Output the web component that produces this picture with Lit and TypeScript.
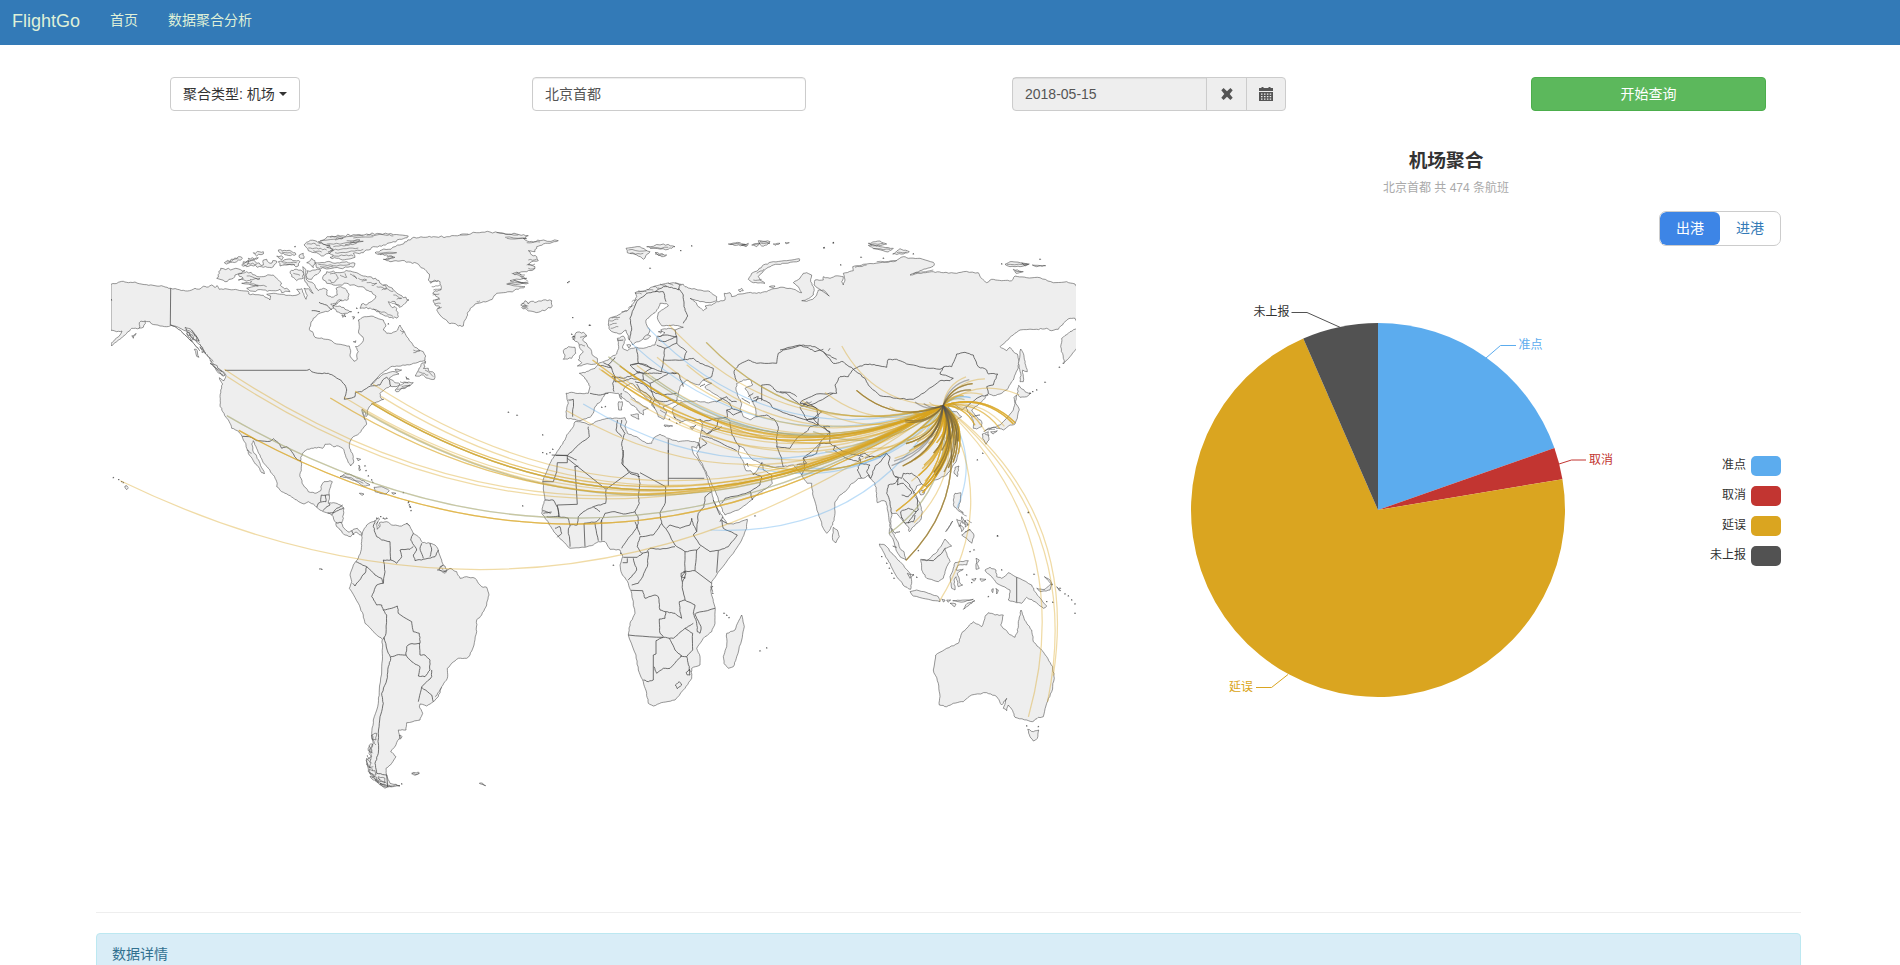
import { LitElement, html, svg, css } from "lit";
import { customElement, state } from "lit/decorators.js";

/* ---------- map sheets: every sheet holds points in thirds of a pixel ---------- */
type Sheet = [number, number];
const NA: Sheet = [100, 220];
const GL: Sheet = [340, 220];
const EU: Sheet = [540, 230];
const AS: Sheet = [780, 230];
const AF: Sheet = [520, 450];
const SA: Sheet = [320, 500];
const OC: Sheet = [850, 440];

type Pt = [number, number];
const pts = (s: Sheet, text: string): Pt[] =>
  text.trim().split(/\s+/).map((p) => {
    const [x, y] = p.split(",").map(Number);
    return [s[0] + x / 3, s[1] + y / 3] as Pt;
  });

let seed = 7;
const rnd = () => {
  seed = (seed * 16807) % 2147483647;
  return seed / 2147483647 - 0.5;
};

/* Coasts and rivers are broken up a little so that long segments do not look ruled. */
const roughen = (list: Pt[], amount: number, closed: boolean): Pt[] => {
  if (!amount) return list;
  const out: Pt[] = [];
  const n = closed ? list.length : list.length - 1;
  for (let i = 0; i < n; i++) {
    const a = list[i];
    const b = list[(i + 1) % list.length];
    out.push(a);
    const dx = b[0] - a[0];
    const dy = b[1] - a[1];
    const len = Math.hypot(dx, dy);
    const edge = (a[0] < 111.5 && b[0] < 111.5) || (a[0] > 1075.5 && b[0] > 1075.5);
    if (edge || len < 2) continue;
    const steps = Math.min(5, Math.max(2, Math.round(len / 2)));
    for (let k = 1; k < steps; k++) {
      const t = k / steps;
      const d = rnd() * amount;
      out.push([a[0] + dx * t - (dy / len) * d, a[1] + dy * t + (dx / len) * d]);
    }
  }
  if (!closed) out.push(list[list.length - 1]);
  return out;
};
const toPath = (list: Pt[], closed: boolean) =>
  "M" + list.map((p) => p[0].toFixed(1) + " " + p[1].toFixed(1)).join("L") + (closed ? "Z" : "");
const area = (rough: number, ...parts: [Sheet, string][]) =>
  toPath(roughen(parts.flatMap(([s, t]) => pts(s, t)), rough, true), true);
const lines = (s: Sheet, rough: number, text: string) =>
  text.split(";").filter((t) => t.trim()).map((t) => toPath(roughen(pts(s, t), rough, false), false)).join("");
const isles = (s: Sheet, rough: number, text: string) =>
  text.split(";").filter((t) => t.trim()).map((t) => area(rough, [s, t])).join("");
const dots = (s: Sheet, text: string) =>
  pts(s, text).map(([x, y]) => `M${(x - 0.5).toFixed(1)} ${y.toFixed(1)}l.7-.4.4.5z`).join("");

const northAmerica = area(1.1,
  [NA, "33,193 45,191 55,187 70,184 85,188 105,186 118,191 140,194 165,197 190,199 212,205 232,208 250,211 262,213 275,210 285,205 300,207 310,199 325,201 335,195 345,203 352,197 358,208 375,206 400,209 425,212 445,214 446,222 465,224 490,226 510,240 512,228 500,223 520,220 545,223 565,226 588,226 600,220 590,208 605,206 612,226 618,238 622,226 612,205 625,206 632,215 640,220 628,200 615,185 612,165 608,140 618,150 620,180 640,190 648,205 655,212 670,205 682,210 680,225 695,232 712,225 708,205 722,200 740,210 747,222 745,238 730,242 715,240 708,250 692,252 700,262 688,272 672,276 655,282 640,295 632,312 628,328 640,340 645,352 665,354 690,360 710,372 735,376 748,378 752,392 750,408 762,424 772,418 770,405 775,395 766,380 778,376 790,362 788,350 776,340 778,320 775,300 788,292 800,290 820,289 835,296 850,300 858,318 850,330 860,340 875,340 885,335 893,330 900,315 908,330 915,340 925,355 935,368 945,382 955,388 970,395 977,408 975,420 960,424 940,430 915,436 890,438 872,440 860,450 845,460 830,475 820,485 812,495 828,480 845,466 865,458 885,455 897,462 880,466 868,474 885,488 900,492 888,500 870,498 850,512 840,520 843,535 851,538 835,545 818,550 808,560 802,572 803,585 798,590 795,575 786,568 790,585 797,600 800,612 790,625 778,640 760,650 750,665 748,678 752,690 760,710 760,730 752,738 745,728 738,712 733,695 728,685 715,678 700,680 690,672 675,673 668,685 655,682 640,685 622,688 608,700 602,712 604,740 600,770 610,795 625,815 645,820 662,812 665,795 672,785 690,782 697,785 692,800 687,818 688,825 685,850 700,848 722,855 732,865 730,885 728,900"],
  [SA, "68,62 65,70 72,85 88,97 100,88 112,85 122,95 128,108 118,104 108,96 92,110 75,105 60,90 50,80 48,68 35,45 20,38 5,32"],
  [NA, "650,862 640,852 625,845 612,852 590,840 565,825 545,815 530,800 530,785 520,765 505,745 490,728 480,705 468,680 460,662 455,672 458,690 470,710 480,730 488,748 493,762 485,758 475,740 460,722 445,700 440,685 437,670 428,655 420,640 412,632 395,625 390,610 378,592 368,575 360,555 360,530 362,510 368,492 358,473 372,482 378,466 370,456 355,446 340,432 330,418 315,398 305,381 290,366 280,349 265,335 250,330 235,322 215,315 200,320 180,318 155,312 150,305 135,303 118,325 95,325 80,340 68,350 45,368 35,378 33,370 45,358 60,345 66,333 50,335 33,331"]);

const arctic = isles(NA, 2.2,
  "362,145 400,147 435,152 425,160 405,165 400,175 375,185 350,175 358,160;" +
  "415,163 440,155 465,165 485,170 510,165 520,165 530,175 540,185 545,200 560,205 570,215 545,218 540,208 520,212 490,210 450,213 440,205 475,198 425,190 455,185 415,180 430,175;" +
  "373,128 400,118 420,110 427,115 410,125 385,130;" +
  "425,135 430,125 455,120 470,130 490,135 490,120 500,118 510,130 525,122 530,128 520,140 490,142 460,138 440,140;" +
  "460,98 490,95 490,102 470,108;430,132 445,120 440,136;445,115 475,113 455,121;" +
  "535,125 560,118 585,122 600,125 595,138 560,135 540,138;535,90 560,92 580,98 588,103 560,105 540,98;" +
  "645,128 680,125 705,130 740,125 765,130 760,142 720,145 680,147 650,143;" +
  "655,65 690,50 720,48 760,44 800,42 840,41 880,44 925,48 905,58 880,65 850,75 820,80 805,90 790,98 760,100 765,112 740,118 710,115 690,112 700,105 685,95 700,88 680,82 690,75 665,70;" +
  "612,75 625,65 645,62 670,72 690,80 700,90 690,100 670,108 650,98 625,92;" +
  "620,128 635,115 645,128 640,143;598,105 610,100 612,115 602,115;530,108 550,112 545,120;570,155 590,148 608,155 610,175 590,182 575,170;622,152 662,150 645,165 635,178 620,172;" +
  "672,165 680,155 700,153 720,158 745,153 770,158 790,168 810,170 830,180 845,192 865,200 880,210 900,225 927,240 915,250 898,262 885,245 865,245 872,258 890,265 895,290 880,295 850,285 830,275 815,268 800,262 780,265 785,252 800,255 820,240 828,228 815,215 795,205 775,200 755,195 740,190 720,195 700,195 680,190 670,180;" +
  "700,255 720,258 735,268 755,275 735,280 710,275 700,265;725,285 735,283 738,290 728,292;757,290 765,292 760,298;760,365 768,362 766,368;" +
  "330,430 345,434 360,448 375,466 365,466 348,450;283,388 292,392 297,412 288,402;255,322 275,332 290,350 298,362 285,360 270,345;262,335 280,350 276,365 266,352;300,380 312,392 306,398;95,348 108,340 100,355;118,308 135,303 130,322 118,324;" +
  "975,422 962,440 950,460 946,468 970,465 985,475 1003,478 1003,460 990,455 985,445 970,445 976,430;885,448 905,450 895,454;885,510 895,500 920,488 940,488 930,498 905,505 895,515;918,470 928,478 920,478") +
  isles(NA, 0.9, "720,770 735,760 755,765 775,775 795,785 810,795 790,798 770,785 745,775;822,802 845,800 868,812 858,822 840,820 825,815;778,820 792,822 785,826;875,818 888,820 880,823;75,798 80,797 85,803 80,809 76,804;770,715 782,718 774,722;776,735 782,750 778,752");
/* fjords and channels that cut into the northern coasts */
const fjords =
  lines(NA, 1.6, "660,62 700,58 730,54 705,60;690,52 740,50 790,48;680,72 730,70 790,64 735,74;700,80 740,76 770,70;690,92 730,86 775,84;705,98 745,96 790,88;700,108 740,105 760,108;740,62 780,60 750,66;800,46 850,44 880,48;760,54 820,50;620,72 640,70 660,78;625,84 650,84 680,90;640,92 665,96;655,133 700,137 750,133;660,140 700,141;545,126 590,128;550,132 585,134;545,96 575,100;440,128 470,133;380,126 415,116;440,168 480,176 450,178;450,192 500,200;690,162 705,160 715,175 700,188 685,180;720,165 740,172 735,160;750,162 770,176 760,165;775,175 800,180 785,184;800,188 830,190 815,196;830,200 860,206 845,210;850,194 870,212 880,214;880,225 905,235 890,238;875,250 900,258;820,268 860,280 880,290;580,160 600,166;255,325 285,345 300,368;260,340 285,360;275,330 290,352 292,366;300,372 318,400 310,395;320,402 340,425;330,420 345,440 365,456;340,438 362,462 370,468;890,508 930,495 905,500;900,485 925,490;940,390 960,392 940,398;900,330 912,335 905,342;955,455 985,465;975,450 1000,470;790,575 795,600;730,766 790,790;440,690 455,700") +
  lines(GL, 1.6, "115,100 170,98 120,104;140,110 165,112 135,118;495,52 560,56 500,55;470,38 535,45;560,68 600,66;360,44 385,42;515,160 555,165;530,155 550,172;505,190 550,188;520,180 560,192;545,175 565,185;565,120 590,118;560,135 585,132;565,145 585,145;270,185 295,182;275,200 300,195;280,210 304,208;278,225 298,222;285,240 300,238;285,252 302,250;292,265 305,262;545,250 565,258;550,262 565,266;410,245 420,242") +
  lines(EU, 1.6, "208,272 235,268;208,285 230,280;212,295 235,290;215,264 240,262;245,245 262,242;265,235 280,225;275,215 292,208;285,190 305,192;295,182 320,186;320,178 340,180;340,170 358,174;360,162 380,168;385,158 400,166;405,158 425,165;265,60 320,62;270,70 310,70;330,55 385,52;345,72 370,74;570,42 615,43;640,42 690,40;660,34 690,40;120,322 140,318;118,345 135,348;640,150 665,148;650,130 672,118;345,505 360,525;360,540 378,550;400,510 425,512") +
  lines(AS, 1.2, "270,44 310,40;280,56 330,58;350,68 380,66;680,103 740,104;705,122 725,126;225,112 260,105;290,95 350,92;400,130 460,120;70,525 95,515;65,518 88,528;625,600 645,598;615,612 628,616;560,870 575,878;545,850 560,858;550,880 565,885;555,905 570,900") +
  lines(SA, 1.8, "155,705 168,735;148,738 158,760;142,765 155,790;142,790 158,812;150,815 165,830;155,832 178,845;165,842 195,855;175,835 200,850;180,850 215,860;148,755 152,780;145,800 160,800;275,822 298,820;205,855 240,858;365,205 380,215 372,220;345,590 365,562;258,70 270,78;172,65 178,80");
const smallIsles =
  dots(NA, "40,773 56,779 65,785 70,788 795,738 798,752 805,768 815,780 818,787 926,845 928,855 931,862 933,872 910,818 830,895 842,890 855,897 34,240 585,80 865,312 770,265 775,278") +
  dots(GL, "698,293 748,316 505,577 531,586 683,188 687,185 700,350 695,343") +
  dots(EU, "8,615 8,668 20,672 30,668 38,658 150,286 330,115 422,62 455,48 852,53 880,39 185,532 196,530 388,568 404,562 420,578 410,580") +
  dots(AS, "182,105 243,82 400,72 665,102 780,88 652,918 745,848 132,54 160,38 310,85 608,670 592,690 838,412 850,400 770,480 758,485 750,490 795,457") +
  dots(AF, "280,346 705,198 720,603 740,594 612,490 620,496 627,503 8,168 577,410 578,430 302,310") +
  dots(SA, "0,207 5,208 265,8 270,20 200,55 190,55 245,852") +
  dots(OC, "95,350 110,370 118,385 125,400 132,415 200,412 190,405 360,335 372,330 205,332 443,288 535,217 530,858 565,860 415,470 552,403 455,390 350,405 365,428 630,445 645,462 655,468 665,480 675,492 675,520 608,487 590,485");

const greenland = isles(GL, 1.8,
  "105,98 125,90 145,88 180,75 200,65 215,55 250,52 280,50 320,50 360,45 410,38 450,36 490,40 530,42 565,47 550,55 568,65 600,62 655,62 630,70 610,72 590,80 585,95 565,92 575,105 590,110 595,122 575,125 565,135 585,140 580,150 560,155 520,160 540,168 560,175 510,182 545,188 565,190 500,192 555,200 535,208 510,215 490,218 470,220 460,232 450,240 430,245 405,252 395,262 385,275 380,290 372,305 370,318 355,318 340,310 325,308 310,295 300,285 290,270 300,262 285,255 280,240 298,235 278,220 285,212 302,210 300,185 285,180 272,190 265,180 268,162 250,145 230,130 205,126 180,123 150,125 130,118 160,112 140,105 120,103;" +
  "542,255 555,242 565,252 575,244 590,246 610,240 635,242 637,258 620,268 595,277 570,273 545,262 560,258");

const eurasia = area(1,
  [EU, "78,490 95,487 120,490 145,490 150,470 140,450 125,435 118,430 135,428 150,420 165,415 175,400 190,395 205,390 215,380 230,372 236,350 232,325 250,318 256,330 250,345 248,355 262,362 275,355 290,352 310,355 325,350 345,345 350,330 352,318 360,320 375,308 362,300 385,295 405,300 430,292 400,285 365,287 360,280 352,262 355,248 370,238 385,228 380,221 360,220 355,235 345,248 330,258 318,270 320,285 330,300 325,312 305,330 285,338 278,345 268,330 262,312 258,300 240,312 225,308 210,300 205,285 208,265 230,258 245,248 265,240 280,220 290,200 285,188 320,180 345,168 370,162 400,158 430,163 435,170 450,175 480,180 510,185 530,200 530,212 510,218 480,215 450,205 465,215 475,230 490,242 500,235 495,228 515,225 530,215 555,210 553,190 570,188 575,200 600,192 625,188 650,190 680,185 690,180 720,172 750,175 770,182 785,188 775,170 760,158 780,145 790,130 800,128 815,135 812,155 822,175 820,195 800,208 785,212 800,214 818,208 830,195 835,180 850,180 868,198 845,182 822,165 825,150 850,150 850,140"],
  [AS, "150,145 165,138 190,140 185,155 190,165 195,150 190,130 220,122 218,110 250,103 300,98 340,95 370,80 385,85 420,85 460,97 463,105 450,113 420,122 390,135 430,128 460,125 490,128 530,130 550,125 595,128 600,140 620,158 635,148 665,152 695,152 705,138 740,143 780,143 820,158 860,155 885,162 891,172 891,278 885,265 870,265 855,275 835,298 815,302 800,295 770,298 720,300 700,315 680,332 660,350 680,362 690,352 700,365 712,372 718,395 712,420 700,450 680,480 660,492 640,497 625,490 610,510 590,528 575,540 590,560 605,575 605,590 590,597 580,595 580,575 575,560 562,545 560,530 545,540 530,528 515,520 505,530 515,545 530,545 545,560 530,570 520,580 535,600 540,625 540,650 530,690 515,715 500,735 480,745 460,750 440,770 425,762 410,768 400,790 405,800 420,820 427,845 422,870 400,890 388,905 385,890 375,880 362,865 350,850 335,850 332,880 335,905 350,930 360,955"],
  [OC, "162,335 168,360 150,350 138,330 130,300 118,280"],
  [AS, "328,905 330,880 325,850 318,815 305,812 292,818 290,790 285,760 270,745 265,735 250,745 235,745 225,755 210,765 200,780 180,795 165,815 165,850 158,885 145,905 140,910 130,895 115,850 100,800 95,760 82,760 70,745 65,735 55,722"],
  [EU, "760,705 730,710 700,712 668,702 640,690 625,675 612,655 598,648 595,668 610,695 618,722 632,722 640,735 655,715 666,697"],
  [AF, "730,60 755,75 757,100 740,115 715,130 695,150 655,180 615,195 608,185 600,160 590,135 570,90 550,50 530,10"],
  [EU, "480,655 475,640 482,620 485,600 488,580 480,568 460,572 440,570 425,575 405,565 398,550 398,535 410,525 430,515 470,512 500,518 530,515 545,505 520,490 500,478 495,470 515,460 490,450 478,465 460,460 440,450 420,470 415,490 408,515 395,520 370,530 380,545 372,568 355,560 350,545 340,525 315,500 295,480 283,465 272,460 258,468 250,480 270,495 290,515 315,530 325,535 310,540 310,555 298,548 290,535 270,520 250,505 235,490 215,488 195,490 185,510 165,530 160,550 150,562 120,572 105,568 80,565 78,545 85,520"]);
const caspian = area(1, [EU, "590,460 610,450 630,448 638,465 615,475 625,490 635,510 645,530 648,560 630,570 610,560 600,540 605,520 595,500 588,480"]);

const africa = area(0.8,
  [EU, "105,575 120,575 150,585 175,572 205,565 235,565 255,563 260,575 255,590 262,610 290,620 320,640 335,640 340,625 360,613 385,625 415,635 445,632 475,638 470,655 455,650 460,670 475,690 490,715 500,740 510,770"],
  [AF, "575,125 580,150 595,180 608,200 620,220 640,222 682,208 680,235 665,270 640,310 600,360 575,395 572,420 580,455 586,475 585,520 575,545 550,565 530,595 540,620 540,645 515,655 515,685 495,715 465,750 430,757 400,768 385,760 380,730 370,695 355,660 348,615 325,555 330,520 345,490 335,430 325,400 305,370 300,345 308,320 300,300 270,298 255,275 235,275 220,285 195,292 150,295 130,275 110,255 95,235 80,210 65,190 68,170 75,150 68,95 90,40 105,15"],
  [EU, "55,660 75,630 80,615 100,590"]) +
  isles(AF, 0.8, "665,495 673,530 665,570 650,620 640,650 625,655 612,640 610,620 620,590 620,550 645,540 655,515");

const southAmerica = area(0.9, [SA,
  "125,108 128,95 140,75 150,68 165,62 175,53 178,60 168,72 172,88 180,80 178,68 200,65 215,75 245,78 262,70 272,85 280,100 300,115 308,128 330,130 345,135 355,150 365,180 370,195 352,210 372,215 390,205 410,215 420,235 440,230 465,235 485,260 500,262 507,285 500,315 485,345 470,360 470,395 462,435 450,465 440,475 415,475 395,490 382,505 382,535 365,560 355,590 340,605 320,618 300,612 298,618 308,640 300,660 260,668 258,690 235,690 240,710 225,740 212,755 228,770 215,790 198,805 200,825 210,850 240,857 200,862 180,855 160,830 145,815 140,780 155,770 148,750 160,730 155,700 160,660 175,610 178,570 185,510 187,460 187,418 165,400 135,370 130,345 115,310 88,265 95,245 90,225 100,195 112,180 122,155 125,125"]) +
  isles(SA, 1.5, "275,820 295,816 298,820 285,826;478,850 488,850 497,857 485,853;360,200 375,198 382,210 370,218 358,210;155,705 170,700 168,720 156,718;148,735 158,732 155,758 145,752;140,775 152,790 150,805 140,795;148,808 165,812 168,825 150,822;150,828 170,832 175,848 160,840;175,830 195,835 195,848 180,845;180,850 205,858 195,865;238,706 246,710 240,718");

const europeIsles = isles(EU, 1.4,
  "108,308 130,307 140,318 128,330 142,345 155,365 160,378 172,385 172,398 160,403 135,403 112,408 125,398 115,390 120,375 130,365 118,350 112,335 102,330;70,362 85,350 105,352 107,370 95,385 70,388 75,375;96,322 104,318 100,330;" +
  "272,555 295,552 297,568 285,562;236,515 247,515 245,540 236,540;238,495 245,490 244,508;372,585 398,588 375,590;450,592 468,585 458,598;260,345 272,345 266,354;310,325 320,315 332,318 318,328;355,305 365,303 362,310;" +
  "258,55 300,50 330,65 310,88 290,75 262,68;320,50 370,42 405,50 385,58 345,55;345,68 380,75 365,80;565,42 600,38 620,45 590,46;605,46 625,40 618,50;635,45 660,40 650,50;655,32 690,35 680,45 665,48;700,42 720,40 705,46;735,38 748,38 740,41;" +
  "595,180 605,175 610,182 600,186;688,170 705,168 700,174") + isles(EU, 1,
  "625,148 635,130 655,120 670,105 700,95 740,92 778,86 778,93 735,100 700,105 680,115 665,130 655,140 660,150 675,160 640,158");
const asiaIsles = isles(AS, 1,
  "265,40 300,33 320,42 290,48;265,46 300,50 340,55 325,66 285,56;338,72 360,56 388,65 370,72;675,103 690,95 720,98 745,103 720,110 690,110;757,105 797,107 770,110;700,118 730,125 708,130;725,98 748,102 735,108;" +
  "891,293 870,305 845,325 842,350 850,385 853,398 870,380 891,353;722,357 730,370 735,400 742,425 728,420 730,455 720,455 722,430 715,400;712,490 715,472 716,466 735,485 752,490 740,500 720,502;" +
  "702,502 710,495 707,520 718,540 712,565 705,582 690,585 670,600 655,595 640,592 620,600 612,605 625,595 650,590 665,580 675,570 700,540 705,520;607,612 625,605 627,630 618,643 608,625;632,605 652,602 640,612;" +
  "525,712 537,708 532,740 522,730;418,785 435,778 432,792 422,795;160,892 172,900 178,920 168,938 158,930;525,790 542,788 542,810 535,835 550,850 540,845 522,830 520,810;545,915 570,898 582,915 575,940 560,925;497,905 518,873 505,895;545,860 555,875 548,880;530,868 545,875 538,890;555,870 565,885 556,892;540,885 552,895 545,905") +
  isles(OC, 1,
  "88,312 105,315 130,345 155,370 180,400 185,425 182,448 165,440 140,410 120,370 105,345;180,455 200,450 235,460 265,470 270,485 235,478 190,468;275,478 285,480 280,486;290,480 302,480 295,487;308,482 345,480 370,478 340,486;300,490 318,492 314,500;340,508 352,490 375,482 350,500;" +
  "212,358 230,362 262,335 285,297 305,318 285,325 290,340 300,365 290,380 280,415 265,425 230,415 215,390;315,368 355,362 350,375 325,375 318,390 340,388 322,400 330,430 338,435 325,440 318,410 312,420 315,450 305,445 300,410 310,385;" +
  "405,390 420,382 438,390 440,410 455,415 475,398 500,412 545,435 555,455 575,480 590,498 580,505 555,485 530,472 515,490 500,488 475,480 480,450 440,430 425,410 415,402;560,445 585,448 605,432 600,450 570,455;583,410 600,420 608,435;620,440 632,452 628,452;378,355 388,360 380,372 388,385 378,388;365,418 378,415 372,424;390,416 408,418 395,424;425,450 430,446 428,458;438,445 445,450 440,462;172,400 190,405 180,415;" +
  "533,868 550,875 566,870 562,895 550,903 540,890");
const australia = isles(OC, 1,
  "513,510 522,535 530,550 545,570 550,605 570,625 590,650 608,680 613,715 605,755 590,790 580,830 565,832 547,845 530,840 495,832 488,812 475,795 470,812 460,805 470,775 455,795 440,770 410,758 365,765 340,785 310,790 290,800 268,795 270,770 265,730 250,690 257,645 290,625 325,610 335,580 355,560 370,545 395,560 405,530 415,518 435,525 460,525 452,555 475,580 495,592 503,575 505,545");

const ruled =
  lines(NA, 0, "212,205 211,315;375,451 620,451;427,649 448,650") +
  lines(AF, 0, "445,0 445,108;445,85 553,85;142,25 258,118 328,67;360,68 437,110 436,160;142,16 108,16;142,16 142,38 112,38 110,65 100,95 68,95;163,50 175,48;165,50 172,163 112,165;192,220 195,290;310,322 352,322;308,338 322,338 322,325;333,421 368,422;595,302 590,368;525,362 575,400;408,572 408,612 400,615 400,690;245,210 245,272") +
  lines(EU, 0, "385,628 385,668;665,465 665,512;35,675 82,677") +
  lines(OC, 0, "500,412 500,487") + lines(SA, 0, "200,825 203,860");
const borders = ruled +
  lines(NA, 0.8, "211,315 228,322 245,335 258,348 270,360 285,375 300,392;620,451 628,448 635,455 660,460 685,460 705,470 722,480 735,495 740,510 737,525 733,538 750,535 765,530 766,518 785,515 800,505 812,498 840,495 848,480 860,472 868,480 872,498;448,650 470,662 510,664 520,656 535,668 545,685 560,680 572,690 582,705 590,718 602,722;662,845 664,825 688,825;650,862 655,850 668,845;668,872 678,862 690,855 688,850;683,880 700,878 720,868 732,863;668,845 678,845 676,825;635,272 660,275;657,247 680,255 695,270;700,258 725,240") +
  lines(SA, 0.9, "35,45 50,25 68,15;48,68 65,68;95,92 102,105;165,62 160,80 170,110 185,120 210,125 212,180 230,190 245,170 240,150 270,148 280,140;280,100 272,120 285,140 290,150 280,165 285,182 310,178 345,170;305,130 300,145 310,175;330,130 335,150 330,170;355,150 345,170;212,180 190,180 195,215 190,250 185,235 165,225 140,200 118,190 108,185;140,200 135,220 125,230 105,258 98,250;190,250 170,255 155,290 170,315 185,315 190,330 215,325 232,318 235,340 275,365 280,395 298,400 300,430 270,432 260,440 258,465 230,465 212,470;190,330 200,345 198,400 190,418;192,412 205,460 212,475 205,500 200,540 185,580 190,610 180,650 175,700 175,760 165,790 170,820 200,825;258,465 275,485 300,500 295,528 315,530 330,510 330,480 315,465 300,465 298,430;335,510 335,530 305,560 295,605;305,562 335,585 340,605") +
  lines(AF, 0.8, "310,0 308,45 330,65 355,72 360,100 355,140 358,160 345,185;258,120 257,160 220,170 240,185;255,190 285,185 310,192 345,185;242,220 255,190;220,170 190,185 175,200 172,225 150,225;192,220 230,215 240,205;225,220 235,272;150,225 145,240 150,290;112,165 118,200 145,205 150,225;80,200 100,200 118,200;75,150 100,150 115,180 115,200;70,190 95,186;68,182 92,190;105,235 120,230 125,250 112,262;345,185 355,205 355,220 345,240 325,265 305,295;345,215 360,255;360,260 400,255 425,220 420,190 435,160;425,220 440,240 465,285;360,260 352,290 365,310 385,305;380,305 390,295 420,298 465,290;440,235 450,225 480,235 510,225 515,205 520,225 530,245;575,125 555,140 552,170 535,190 530,245 520,255 540,285 570,305 600,300 625,290 652,255 610,235 605,210;465,285 495,305 530,300 540,290;580,150 600,195;530,300 525,362 490,365;495,305 495,365 485,380 488,420 495,450 525,465;385,305 382,350 365,385 355,400 335,405;352,322 368,310;340,325 350,360 335,380 325,390;368,422 375,445 405,435 415,440 420,480 437,485 435,505 418,507 420,550 430,560;437,485 465,490 485,505 480,485 478,455 495,450;527,490 585,475;525,465 520,490 530,520 532,545 540,550 543,530 530,505 525,490;325,555 430,562 460,565 495,535 518,550 518,600 500,620 480,618;430,562 408,572;400,690 385,695 370,690;448,565 465,600 485,618 450,655 430,655 410,670 402,650;500,620 508,650 510,665;466,705 478,695 485,705 472,716 466,705;498,668 508,658 510,675 502,675 498,668;483,370 497,365 495,385 483,380 483,370;488,395 494,380;520,520 495,535;572,410 578,425;605,160 615,145 660,135 690,125 720,105 725,80 700,70;690,125 698,150;675,45 682,40 685,50;620,220 605,210;600,215 608,200") +
  lines(EU, 0.9, "145,590 148,620 115,645 82,677 110,690;245,570 242,590 255,610 245,640 250,670 245,700 270,730 300,740;232,570 228,600 245,620;480,655 500,640 485,625;485,618 515,625 545,640 590,662;485,600 500,612 545,590;480,568 490,575 530,565 555,562 570,572;535,568 530,590 500,612;478,640 480,655;570,575 575,610 590,640 598,650;545,505 570,520 575,535 560,540 562,562;575,535 605,545;560,540 580,555 605,545;648,560 680,555 705,570 715,590 710,620 710,650 725,685 730,710;710,650 750,655 775,620 800,605 810,590 835,585 835,565;770,705 800,700 790,685 830,650 860,615 870,610 850,590 870,590;635,515 660,505 690,520 700,535 750,555 800,570 830,565;665,465 690,465 710,485 740,490 780,525 800,530 825,520 880,490;785,530 800,515 830,535 835,560 800,570 790,550 780,530;590,455 582,425 595,405 625,390 650,400 710,400 715,370 730,360 790,345 825,350 855,370 890,388;" +
  "85,510 100,508 98,560;150,490 175,495 205,490;175,405 200,410 215,415 225,440 218,460 222,485;225,382 215,395 205,405 215,415;190,398 215,412;290,355 295,400 270,405 290,425 310,430;295,400 335,415 365,425 370,390 375,355;215,440 250,445 280,435 300,425;275,405 295,400 320,405 335,415 310,430 290,425;310,430 335,430 365,430;310,430 310,450 330,460 360,445 385,430 365,425;275,445 310,450;330,460 335,485 365,495 410,490;335,485 345,510 370,515 400,510;395,428 415,430 430,470;385,430 410,430;370,390 430,390 440,365 410,340 375,355 350,345;410,340 410,320 375,335 355,330;410,320 405,300;355,320 375,315 410,320;430,390 460,385 480,400 520,415 515,440 490,450;285,455 310,462 335,485;290,462 300,480 320,490;320,490 335,505 330,518;345,510 335,525 345,535;225,440 225,455 255,452 275,445;268,330 275,300 270,265 290,215 320,190 345,185 370,185 378,215;345,185 370,170 395,172 415,180 420,165;415,175 430,195 432,230 443,258 430,280;232,330 250,330;530,515 560,500 575,515 590,515;605,505 630,520;625,500 640,490;480,470 495,462;640,505 655,500 648,515") +
  lines(AS, 1.1, "130,365 160,400 190,395 220,418 205,440 180,440 165,465 170,490 160,490 110,492 70,510 60,520 100,530;50,500 30,487 0,485;105,365 130,358;150,355 145,362;0,360 60,345 80,352 105,365;100,530 125,545 100,565 115,585 150,605 150,640 190,665 250,680;150,640 120,640 110,670 70,685 75,715 65,735;115,585 80,570;165,645 160,660 200,685 235,695 240,680;240,685 240,700 232,720 245,745;240,700 270,705 260,725 272,745;240,675 255,670 270,680 255,685;270,680 300,680 320,670 330,680 325,700 345,740 355,745;272,745 285,710 305,690 320,670;355,745 345,760 325,765 320,790 330,815 335,850;345,740 365,745 370,730 395,730 415,745 425,762;355,745 352,765 370,760 390,780 395,790 385,800 365,795;370,745 380,755 395,775 410,800 415,840 400,855 385,880;365,865 362,845 385,835 410,845;365,862 375,880 400,875 405,855;335,895 345,910 360,905;" +
  "220,418 240,408 270,402 300,408 320,412 325,388 350,388 380,402 430,412 480,418 492,410 480,432 520,445 510,452 480,452 440,482 400,508 350,505 300,497 265,465 255,445 220,418;492,410 515,410 530,372 555,367 580,375 595,410 620,420 625,432 653,432 640,465 620,470 625,490;625,495 600,500 570,520 560,530;578,560 600,555") +
  lines(OC, 0.8, "215,360 250,362 275,340 285,325;128,318 140,322");

const landPaths = [northAmerica, arctic, greenland, eurasia, africa, southAmerica, europeIsles, asiaIsles, australia];

/* ---------- routes out of Beijing ---------- */
const BLUE = "#5cacee";
const GOLD = "#daa520";
const GREY = "#525252";
const RED = "#c23531";
const project = (lon: number, lat: number): Pt => [594 + lon * 3, 566 - lat * 4];
const hub = project(116.4, 40.1);

/* longitude, latitude, flights on time, delayed, not reported */
const routes: number[][] = [
  [-122.3, 47.4, 0, 1, 0], [-123.2, 49.2, 0, 1, 0], [-122.4, 37.6, 1, 1, 0], [-118.4, 33.9, 0, 3, 0], [-87.9, 42, 0, 2, 0], [-83.3, 42.2, 0, 1, 0],
  [-79.6, 43.7, 0, 2, 0], [-73.7, 45.5, 0, 1, 0], [-71, 42.4, 0, 1, 0], [-73.8, 40.6, 0, 2, 0], [-74.2, 40.7, 1, 2, 0], [-77.5, 38.9, 1, 1, 0], [-77.4, 39.2, 0, 1, 0],
  [-157.9, 21.3, 0, 1, 0], [-0.5, 51.5, 0, 2, 0], [2.5, 49, 0, 2, 0], [1.6, 49.4, 0, 1, 0], [-3.6, 40.5, 1, 0, 0], [-9.1, 38.8, 0, 1, 0], [8.6, 50, 0, 3, 0], [11.8, 48.4, 0, 2, 0],
  [4.8, 52.3, 1, 1, 0], [12.6, 55.6, 1, 0, 0], [17.9, 59.6, 1, 0, 0], [25, 60.3, 0, 1, 0], [37.4, 55.9, 1, 2, 0], [21, 52.2, 0, 1, 0], [16.6, 48.1, 1, 1, 0],
  [14.3, 50.1, 0, 1, 0], [12.2, 41.8, 0, 1, 0], [8.7, 45.6, 0, 1, 0], [8.5, 47.5, 0, 1, 0], [30.9, 50.3, 0, 1, 0], [28.8, 41, 0, 2, 0], [19.2, 47.4, 1, 0, 0],
  [23.9, 37.9, 0, 1, 0], [34.9, 32, 0, 1, 0], [55.4, 25.3, 1, 2, 0], [54.6, 24.4, 1, 0, 0], [51.6, 25.3, 0, 1, 0], [38.8, 9, 1, 0, 0], [67.1, 24.9, 1, 0, 0], [73, 33.6, 1, 1, 0],
  [77.1, 28.6, 0, 1, 0], [69.3, 41.3, 0, 1, 0], [77, 43.4, 0, 1, 0], [82.6, 55, 0, 1, 0], [87.5, 43.9, 0, 4, 1], [104, 1.4, 0, 3, 1], [98.3, 8.1, 1, 1, 0],
  [100.7, 13.7, 0, 4, 0], [106.7, 10.8, 0, 1, 0], [105.8, 21.2, 0, 1, 0], [121, 14.5, 1, 0, 0], [115.2, -8.7, 0, 1, 0], [151.2, -33.9, 0, 1, 0], [144.8, -37.7, 0, 1, 0], [153.1, -27.4, 0, 1, 0],
  [140.4, 35.8, 0, 4, 0], [139.8, 35.5, 0, 4, 0], [135.2, 34.4, 0, 2, 0], [136.8, 34.9, 0, 1, 0], [130.4, 33.6, 0, 1, 0], [126.6, 37.5, 0, 1, 0], [127, 35.2, 0, 3, 0], [128.9, 35.2, 0, 1, 0], [141.7, 42.8, 0, 1, 0],
  [126.2, 45.6, 0, 3, 1], [125.7, 44, 0, 2, 1], [123.5, 41.6, 1, 1, 0], [123.2, 42.6, 0, 2, 0], [125.1, 46.6, 0, 0, 1], [124, 47.3, 0, 1, 0], [129.5, 42.9, 0, 1, 0], [125.5, 42.1, 2, 0, 0], [130.3, 46.8, 0, 1, 0], [121.5, 39, 1, 1, 0], [120.4, 37.2, 1, 0, 0],
  [121.3, 31.2, 2, 7, 1], [121.8, 31.1, 1, 5, 0], [120.4, 30.2, 1, 4, 1], [118.9, 31.7, 1, 4, 1], [120, 31.9, 0, 2, 0], [120.4, 36.3, 1, 1, 0], [117.3, 31.8, 0, 3, 0], [121.4, 28, 0, 3, 0], [119.7, 25.9, 0, 4, 1], [118.1, 24.5, 0, 4, 1], [116.7, 23.5, 0, 2, 1],
  [113.3, 23.4, 0, 6, 1], [113.8, 22.6, 0, 6, 1], [113.9, 22.3, 0, 3, 0], [113.4, 22, 0, 2, 0], [110.3, 20, 0, 5, 0], [109.5, 18.3, 0, 5, 0], [109, 19, 0, 2, 0], [108.2, 22.6, 0, 4, 0], [110, 25.2, 0, 3, 0],
  [102.9, 25, 0, 4, 1], [106.8, 26.5, 0, 3, 0], [100, 26.2, 0, 0, 1], [100.2, 26.9, 0, 1, 0], [99.2, 25.1, 0, 0, 1], [104, 30.6, 0, 5, 1], [106.6, 29.7, 0, 4, 1], [105, 28.8, 0, 2, 0], [91, 29.3, 0, 1, 0],
  [103.6, 36.5, 1, 4, 1], [103.8, 36, 0, 2, 1], [102, 36.5, 0, 2, 0], [108.8, 34.4, 1, 4, 0], [106.4, 38.3, 0, 3, 0], [98.5, 39.8, 0, 1, 0], [111.8, 40.9, 0, 1, 0], [109.9, 40.6, 0, 0, 1], [107, 41, 0, 0, 1], [104.4, 31.4, 0, 2, 0],
  [112.6, 37.8, 0, 1, 0], [113.2, 28.2, 0, 4, 1], [114.2, 30.8, 0, 4, 0], [115.9, 28.9, 0, 3, 1], [111.5, 30.6, 0, 2, 0], [110.4, 29.1, 0, 2, 0], [113.8, 34.5, 0, 2, 0], [114.9, 25.8, 0, 2, 0], [117.8, 27.7, 0, 2, 0], [118.3, 29.7, 0, 2, 0], [107.7, 31.1, 0, 2, 0], [112.3, 32.1, 0, 2, 0], [117.2, 34.1, 0, 2, 0], [119.2, 34.6, 1, 2, 0], [110.3, 21.2, 0, 2, 0], [109.4, 24.3, 0, 2, 0],
];
const arc = (lon: number, lat: number) => {
  const [x, y] = project(lon, lat);
  const cx = (hub[0] + x) / 2 - (hub[1] - y) * 0.3;
  const cy = (hub[1] + y) / 2 - (x - hub[0]) * 0.3;
  return `M${hub[0]} ${hub[1]}Q${cx.toFixed(1)} ${cy.toFixed(1)} ${x.toFixed(1)} ${y.toFixed(1)}`;
};
const arcsOf = (col: number) =>
  routes.flatMap((r) => Array.from({ length: r[col] }, () => arc(r[0], r[1])));

@customElement("flight-map")
export class FlightMap extends LitElement {
  static styles = css`
    :host { display: block; width: 965px; height: 580px; }
    svg { display: block; }
    .land { fill: #eee; stroke: #444; stroke-width: 0.55; stroke-linejoin: round; }
    .sea { fill: #fff; stroke: #444; stroke-width: 0.55; }
    .border { fill: none; stroke: #444; stroke-width: 0.75; stroke-linejoin: round; }
    .fjord { fill: none; stroke: #444; stroke-width: 0.5; }
    .arc { fill: none; stroke-width: 1.25; stroke-opacity: 0.4; }
    .late { stroke-opacity: 0.45; }
  `;
  render() {
    return html`<svg width="965" height="580" viewBox="111 220 965 580">
      ${landPaths.map((d) => svg`<path class="land" d=${d}></path>`)}
      <path class="sea" d=${caspian}></path>
      <path class="border" d=${borders}></path>
      <path class="fjord" d=${fjords}></path>
      <path class="border" d=${smallIsles}></path>
      ${arcsOf(2).map((d) => svg`<path class="arc" stroke=${BLUE} d=${d}></path>`)}
      ${arcsOf(3).map((d) => svg`<path class="arc" stroke=${GOLD} d=${d}></path>`)}
      ${arcsOf(4).map((d) => svg`<path class="arc late" stroke=${GREY} d=${d}></path>`)}
    </svg>`;
  }
}

const statuses = [
  { name: "准点", count: 93, color: BLUE, text: BLUE, line: "305,58 319.5,45.5 335,45.5", x: 337.5, y: 48.7, anchor: "start" },
  { name: "取消", count: 13, color: RED, text: RED, line: "378,164 390.5,160 405,160", x: 408, y: 163.5, anchor: "start" },
  { name: "延误", count: 337, color: GOLD, text: GOLD, line: "107,374.500 90.500,387.500 75,387.500", x: 72, y: 391, anchor: "end" },
  { name: "未上报", count: 31, color: GREY, text: "#333", line: "159.500,27.500 126,12.500 110.500,12.500", x: 108.5, y: 16, anchor: "end" },
];

@customElement("status-pie")
export class StatusPie extends LitElement {
  static styles = css`
    :host { display: block; }
    svg { display: block; }
    text { font: 12px "Liberation Sans", "Noto Sans CJK SC", sans-serif; }
    .lead { fill: none; stroke-width: 1; }
  `;
  render() {
    const total = statuses.reduce((n, s) => n + s.count, 0);
    const cx = 197, cy = 210, r = 187;
    let at = 0;
    return html`<svg width="460" height="420" viewBox="0 0 460 420">
      ${statuses.map((s) => {
        const a0 = (at / total) * 2 * Math.PI;
        at += s.count;
        const a1 = (at / total) * 2 * Math.PI;
        const p = (a: number) => `${cx + r * Math.sin(a)} ${cy - r * Math.cos(a)}`;
        return svg`<path fill=${s.color} d=${`M${cx} ${cy}L${p(a0)}A${r} ${r} 0 ${a1 - a0 > Math.PI ? 1 : 0} 1 ${p(a1)}Z`}></path>
          <polyline class="lead" stroke=${s.color} points=${s.line}></polyline>
          <text x=${s.x} y=${s.y} fill=${s.text} text-anchor=${s.anchor}>${s.name}</text>`;
      })}
    </svg>`;
  }
}

@customElement("app-root")
export class AppRoot extends LitElement {
  @state() private direction = "出港";
  static styles = css`
    :host { display: block; height: 965px; overflow: hidden; background: #fff; color: #333; font: 14px/20px "Liberation Sans", "Noto Sans CJK SC", sans-serif; }
    * { box-sizing: border-box; }
    .nav { height: 45px; padding-left: 12px; background: #337ab7; display: flex; align-items: flex-start; color: #dff0d8; }
    .brand { font-size: 18px; padding-top: 11px; width: 98px; }
    .link { padding-top: 10px; margin-right: 30px; }
    .page { padding: 32px 99px 0 96px; }
    .controls { display: flex; height: 34px; padding-left: 74px; }
    .box { height: 34px; border: 1px solid #ccc; border-radius: 4px; padding: 6px 12px; white-space: nowrap; }
    .drop { width: 130px; margin-right: 232px; display: flex; align-items: center; }
    .caret { margin-left: 4px; border-top: 4px solid #333; border-left: 4px solid transparent; border-right: 4px solid transparent; }
    .field { width: 274px; margin-right: 206px; color: #555; box-shadow: inset 0 1px 1px rgba(0, 0, 0, 0.075); }
    .date { width: 274px; margin-right: 245px; display: flex; padding: 0; color: #555; background: #eee; }
    .value { flex: 1; padding: 6px 12px; border-right: 1px solid #ccc; box-shadow: inset 0 1px 1px rgba(0, 0, 0, 0.075); }
    .addon { width: 39px; display: grid; place-items: center; }
    .addon + .addon { border-left: 1px solid #ccc; }
    .go { width: 235px; text-align: center; color: #fff; background: #5cb85c; border-color: #4cae4c; }
    .charts { display: flex; height: 801px; padding-left: 15px; }
    .map { padding-top: 109px; margin-right: 35px; }
    .panel { width: 670px; padding-top: 38px; display: flex; flex-direction: column; }
    .title { font-size: 18.7px; line-height: 24px; font-weight: bold; text-align: center; }
    .sub { margin-top: 7px; font-size: 12px; line-height: 16px; color: #aaa; text-align: center; }
    .toggle { align-self: flex-end; margin-top: 15px; width: 122px; height: 35px; border: 1px solid #ccc; border-radius: 7px; display: flex; overflow: hidden; color: #337ab7; line-height: 33px; text-align: center; cursor: pointer; }
    .side { flex: 1; }
    .on { background: #3d85e6; color: #fff; border-radius: 6px; }
    .plot { display: flex; justify-content: space-between; padding-left: 70px; margin-top: 54px; }
    .legend { display: flex; flex-direction: column; gap: 10px; padding-top: 156px; font-size: 12px; }
    .item { display: flex; justify-content: flex-end; gap: 5px; height: 20px; line-height: 18px; }
    .swatch { width: 30px; height: 20px; border-radius: 5px; }
    .rule { height: 1px; background: #eee; margin-bottom: 20px; }
    .details { height: 60px; border: 1px solid #bce8f1; border-radius: 4px; background: #d9edf7; color: #31708f; padding: 10px 15px; }
  `;
  render() {
    return html`
      <nav class="nav"><span class="brand">FlightGo</span><span class="link">首页</span><span class="link">数据聚合分析</span></nav>
      <main class="page">
        <div class="controls">
          <div class="box drop">聚合类型: 机场<span class="caret"></span></div>
          <div class="box field">北京首都</div>
          <div class="box date">
            <span class="value">2018-05-15</span>
            <span class="addon"><svg width="14" height="14" viewBox="0 0 14 14"><path fill="#555" d="M3.6.9 7 4.200l3.400-3.300 2.300 2.300L9.700 7l3 3.800-2.300 2.300L7 9.800l-3.400 3.300-2.300-2.300L4.300 7l-3-3.800z"></path></svg></span>
            <span class="addon"><svg width="14" height="14" viewBox="0 0 14 14"><path fill="#555" fill-rule="evenodd" d="M2.500 0h2v1h5V0h2v1H14v3H0V1h2.500zM0 5h14v9H0zM2 6.500v1.300h1.500V6.500zM5 6.500v1.300h1.500V6.500zM7.900 6.500v1.300h1.500V6.500zM10.700 6.500v1.300h1.500V6.500zM2 9v1.300h1.500V9zM5 9v1.300h1.500V9zM7.900 9v1.300h1.500V9zM10.700 9v1.300h1.500V9zM2 11.400v1.300h1.500v-1.300zM5 11.400v1.300h1.500v-1.300zM7.900 11.400v1.300h1.500v-1.300zM10.700 11.400v1.300h1.500v-1.300z"></path></svg></span>
          </div>
          <div class="box go">开始查询</div>
        </div>
        <section class="charts">
          <div class="map"><flight-map></flight-map></div>
          <div class="panel">
            <div class="title">机场聚合</div>
            <div class="sub">北京首都 共 474 条航班</div>
            <div class="toggle">
              ${["出港", "进港"].map((d) => html`<span class="side ${this.direction === d ? "on" : ""}" @click=${() => (this.direction = d)}>${d}</span>`)}
            </div>
            <div class="plot">
              <status-pie></status-pie>
              <div class="legend">
                ${statuses.map((s) => html`<div class="item"><span>${s.name}</span><span class="swatch" style="background:${s.color}"></span></div>`)}
              </div>
            </div>
          </div>
        </section>
        <div class="rule"></div>
        <div class="details">数据详情</div>
      </main>`;
  }
}
